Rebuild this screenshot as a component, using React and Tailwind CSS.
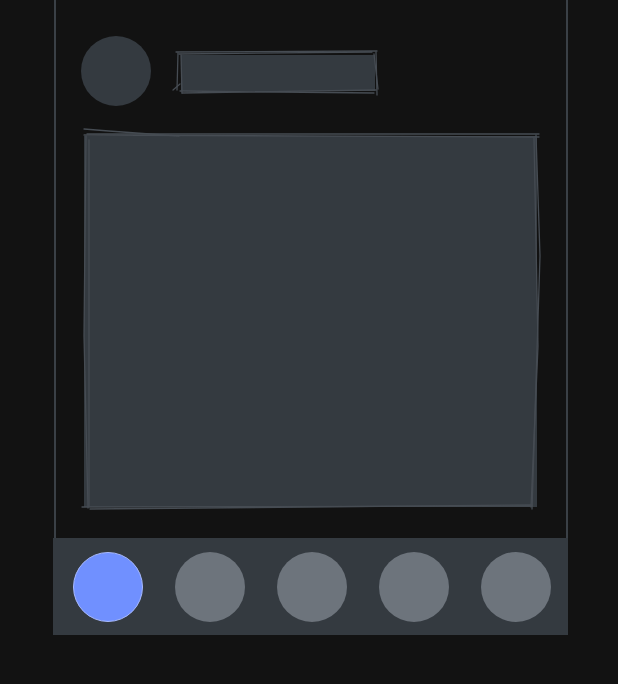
import React from "react";

// Rough sketch strokes laid over a filled box (excalidraw look)
const Sketch = ({ w, h, paths }) => (
  <svg
    className="absolute left-0 top-0 overflow-visible pointer-events-none"
    width={w}
    height={h}
    viewBox={`0 0 ${w} ${h}`}
    fill="none"
  >
    {paths.map((d, i) => (
      <path key={i} d={d} stroke="#464c53" strokeWidth="1.3" strokeLinecap="round" />
    ))}
  </svg>
);

const titlePaths = [
  "M-2 -1 L199 -2",
  "M1 1 L194 -1",
  "M0 0 L-1 37",
  "M3 2 L4 40",
  "M-5 37 L2 31",
  "M4 40 L198 37",
  "M2 38 L196 40",
  "M198 -1 L199 42",
  "M196 1 L200 36",
];

const boxPaths = [
  "M0 -7 Q50 -3 95 0",
  "M3 -2 L455 -2",
  "M0 -1 L455 1",
  "M2 0 L0 200 L4 372",
  "M5 4 L5 370",
  "M-2 371 L448 370",
  "M6 373 L448 369",
  "M452 -1 L456 120 L448 373",
  "M450 2 L454 210 L447 371",
];

export default function App() {
  const tabs = [true, false, false, false, false];

  return (
    <div className="w-[618px] h-[684px] bg-[#121212] overflow-hidden font-['Liberation_Sans',sans-serif]">
      {/* phone frame */}
      <div className="ml-[54px] w-[514px] h-[538px] border-x-2 border-[#3a4046] pl-[25px] pt-[36px]">
        {/* header row */}
        <div className="flex items-center gap-[27px]">
          <div className="w-[70px] h-[70px] rounded-full bg-[#343a40]" />
          <div className="relative w-[197px] h-[38px] mt-[2px]">
            <div className="absolute left-[3px] top-[2px] right-0 bottom-0 bg-[#343a40]" />
            <Sketch w={197} h={38} paths={titlePaths} />
          </div>
        </div>

        {/* content card */}
        <div className="relative ml-[3px] mt-[30px] w-[453px] h-[371px]">
          <div className="absolute inset-0 bg-[#343a40]" />
          <Sketch w={453} h={371} paths={boxPaths} />
        </div>
      </div>

      {/* bottom nav */}
      <div className="ml-[53px] w-[515px] h-[97px] bg-[#343a40] flex items-center justify-between pl-[20px] pr-[17px]">
        {tabs.map((active, i) => (
          <div
            key={i}
            className={
              active
                ? "w-[70px] h-[70px] rounded-full bg-[#7090ff] border border-[#a8baff]"
                : "w-[70px] h-[70px] rounded-full bg-[#6d747c]"
            }
          />
        ))}
      </div>
    </div>
  );
}
